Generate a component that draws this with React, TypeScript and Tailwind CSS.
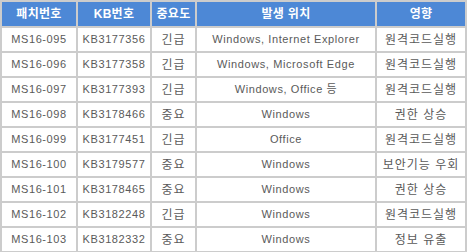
import React from 'react';

type Patch = {
	id: string;
	kb: string;
	level: string;
	target: string;
	impact: string;
};

const patches: Patch[] = [
	{ id: 'MS16-095', kb: 'KB3177356', level: '긴급', target: 'Windows, Internet Explorer', impact: '원격코드실행' },
	{ id: 'MS16-096', kb: 'KB3177358', level: '긴급', target: 'Windows, Microsoft Edge', impact: '원격코드실행' },
	{ id: 'MS16-097', kb: 'KB3177393', level: '긴급', target: 'Windows, Office 등', impact: '원격코드실행' },
	{ id: 'MS16-098', kb: 'KB3178466', level: '중요', target: 'Windows', impact: '권한 상승' },
	{ id: 'MS16-099', kb: 'KB3177451', level: '긴급', target: 'Office', impact: '원격코드실행' },
	{ id: 'MS16-100', kb: 'KB3179577', level: '중요', target: 'Windows', impact: '보안기능 우회' },
	{ id: 'MS16-101', kb: 'KB3178465', level: '중요', target: 'Windows', impact: '권한 상승' },
	{ id: 'MS16-102', kb: 'KB3182248', level: '긴급', target: 'Windows', impact: '원격코드실행' },
	{ id: 'MS16-103', kb: 'KB3182332', level: '중요', target: 'Windows', impact: '정보 유출' },
];

const headers = ['패치번호', 'KB번호', '중요도', '발생 위치', '영향'];
const widths = ['w-[74px]', 'w-[72px]', 'w-[43px]', 'w-[178px]', 'w-[88px]'];

export default function App() {
	return (
		<div className="w-[467px] h-[252px] overflow-hidden bg-white">
			<table
				className="w-[467px] table-fixed border-separate border-spacing-[2px] bg-[#cccccc] text-center"
				style={{ fontFamily: '"Liberation Sans", "Noto Sans CJK KR", sans-serif' }}
			>
				<thead>
					<tr>
						{headers.map((h, i) => (
							<th key={h} className={`${widths[i]} h-[24px] p-0 bg-[#4d88d6] text-white text-[12px] font-bold tracking-[0.3px]`}>
								{h}
							</th>
						))}
					</tr>
				</thead>
				<tbody>
					{patches.map((p) => (
						<tr key={p.id} className="text-[#5a5a5a] text-[11px]">
							<td className="h-[23px] p-0 bg-white tracking-[0.6px]">{p.id}</td>
							<td className="h-[23px] p-0 bg-white tracking-[0.6px]">{p.kb}</td>
							<td className="h-[23px] p-0 bg-white text-[12px] tracking-[1px]">{p.level}</td>
							<td className="h-[23px] p-0 bg-white tracking-[0.6px]">{p.target}</td>
							<td className="h-[23px] p-0 bg-white text-[12px] tracking-[1px]">{p.impact}</td>
						</tr>
					))}
				</tbody>
			</table>
		</div>
	);
}
